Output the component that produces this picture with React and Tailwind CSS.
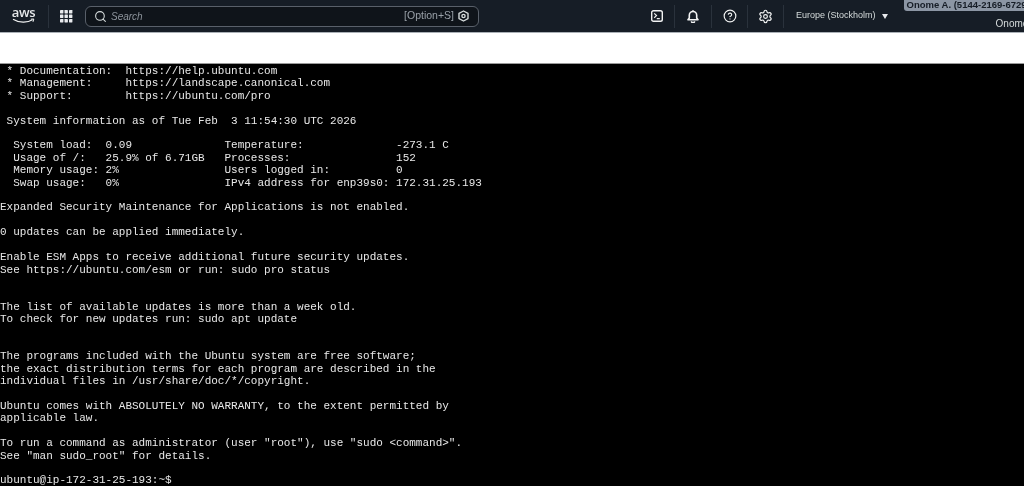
import React from 'react';
import { Search, CircleHelp, Settings } from 'lucide-react';

const terminalLines = [
  ' * Documentation:  https://help.ubuntu.com',
  ' * Management:     https://landscape.canonical.com',
  ' * Support:        https://ubuntu.com/pro',
  '',
  ' System information as of Tue Feb  3 11:54:30 UTC 2026',
  '',
  '  System load:  0.09              Temperature:              -273.1 C',
  '  Usage of /:   25.9% of 6.71GB   Processes:                152',
  '  Memory usage: 2%                Users logged in:          0',
  '  Swap usage:   0%                IPv4 address for enp39s0: 172.31.25.193',
  '',
  'Expanded Security Maintenance for Applications is not enabled.',
  '',
  '0 updates can be applied immediately.',
  '',
  'Enable ESM Apps to receive additional future security updates.',
  'See https://ubuntu.com/esm or run: sudo pro status',
  '',
  '',
  'The list of available updates is more than a week old.',
  'To check for new updates run: sudo apt update',
  '',
  '',
  'The programs included with the Ubuntu system are free software;',
  'the exact distribution terms for each program are described in the',
  'individual files in /usr/share/doc/*/copyright.',
  '',
  'Ubuntu comes with ABSOLUTELY NO WARRANTY, to the extent permitted by',
  'applicable law.',
  '',
  'To run a command as administrator (user "root"), use "sudo <command>".',
  'See "man sudo_root" for details.',
  '',
  'ubuntu@ip-172-31-25-193:~$',
];

function GridIcon() {
  return (
    <svg width="13" height="13" viewBox="0 0 13 13" fill="#e8eaed">
      {[0, 4.5, 9].map(y =>
        [0, 4.5, 9].map(x => <rect key={`${x}-${y}`} x={x} y={y} width="3.4" height="3.4" rx="0.4" />)
      )}
    </svg>
  );
}

function ShellIcon() {
  return (
    <svg width="12" height="12" viewBox="0 0 12 12" fill="none" stroke="#f2f3f3">
      <rect x="0.7" y="0.7" width="10.6" height="10.6" rx="1.8" strokeWidth="1.4" />
      <path d="M3.2 3.4 5.5 5.6 3.2 7.8M5.8 8.6h3" strokeWidth="1.2" />
    </svg>
  );
}

function BellIcon() {
  return (
    <svg width="12" height="13" viewBox="0 0 12 13" fill="none" stroke="#f2f3f3" strokeWidth="1.6">
      <path d="M1 9.8h10L9.7 8V5.2a3.7 3.7 0 0 0-7.4 0V8z" strokeLinejoin="round" />
      <path d="M6 1.4V.2M4.5 11.2a1.5 1.5 0 0 0 3 0" />
    </svg>
  );
}

function AwsLogo() {
  return (
    <div className="flex h-[20px] w-[23px] flex-col items-center">
      <span className="font-['Open_Sans',sans-serif] text-[13px] leading-[13px] font-semibold tracking-[-0.4px] text-[#e6e8ea]">aws</span>
      <svg width="23" height="6" viewBox="0 0 23 6" fill="none" className="mt-[-1px]">
        <path d="M1 1.2C7 5 15.5 5 20.5 1.8" stroke="#f2f3f3" strokeWidth="1.1" />
        <path d="M18.8 1.2 21.8 1 21 3.8" stroke="#f2f3f3" strokeWidth="1" />
      </svg>
    </div>
  );
}

function Divider() {
  return <div className="h-[23px] w-px bg-[#2a323c]" />;
}

export default function App() {
  return (
    <div className="flex h-[503px] w-[1024px] flex-col overflow-hidden bg-white font-['Liberation_Sans',sans-serif] blur-[0.35px]">
      <header className="flex h-[33px] shrink-0 items-center border-b border-[#aab0b6] bg-[#161d26]">
        <div className="ml-[12px]"><AwsLogo /></div>
        <div className="ml-[13px]"><Divider /></div>
        <div className="ml-[11px] flex"><GridIcon /></div>
        <div className="ml-[12px] flex h-[21px] w-[394px] items-center rounded-[6px] border border-[#59606a] bg-[#0f141a] pl-[8px] pr-[9px]">
          <Search size={13} strokeWidth={2} color="#d5dbdb" />
          <span className="ml-[4px] text-[10px] italic text-[#8d949c]">Search</span>
          <span className="ml-auto text-[10.5px] text-[#99a0a8]">[Option+S]</span>
          <svg width="11" height="12" viewBox="0 0 11 12" fill="none" stroke="#d5dbdb" strokeWidth="1.4" className="ml-[4px]">
            <path d="M5.5 1 10 3.4v5.2L5.5 11 1 8.6V3.4z" strokeLinejoin="round" />
            <circle cx="5.5" cy="6" r="1.6" />
          </svg>
        </div>
        <div className="ml-[172px] flex items-center">
          <ShellIcon />
          <div className="ml-[11px]"><Divider /></div>
          <div className="ml-[12px] flex"><BellIcon /></div>
          <div className="ml-[12px]"><Divider /></div>
          <div className="ml-[11px] flex"><CircleHelp size={14} strokeWidth={2} color="#f2f3f3" /></div>
          <div className="ml-[10px]"><Divider /></div>
          <div className="ml-[10px] flex"><Settings size={15} strokeWidth={1.9} color="#f2f3f3" /></div>
          <div className="ml-[10px]"><Divider /></div>
          <span className="ml-[12px] text-[9px] whitespace-nowrap text-[#d5dbdb]">Europe (Stockholm)</span>
          <span className="ml-[6px] h-0 w-0 border-x-[3.5px] border-t-[5px] border-x-transparent border-t-[#e8eaed]" />
        </div>
        <div className="relative ml-[16px] h-full flex-1">
          <span className="absolute top-0 left-0 h-[11px] w-[140px] rounded-bl-[3px] bg-[#8c96a4] pl-[3px] text-[9.5px] leading-[10px] font-bold whitespace-nowrap text-[#161d26]">Onome A. (5144-2169-6729)</span>
          <span className="absolute top-[16px] left-[92px] text-[10px] whitespace-nowrap text-[#d5dbdb]">Onome</span>
        </div>
      </header>
      <div className="h-[30px] shrink-0 bg-white" />
      <main className="h-[423px] shrink-0 border-t border-[#9a9a9a] bg-black pt-[1px] font-['Liberation_Mono',monospace] text-[11px] leading-[12.41px] whitespace-pre text-[#e8e8e8]">
        {terminalLines.map((line, i) => (
          <div key={i} className="h-[12.41px]">{line}</div>
        ))}
      </main>
    </div>
  );
}
